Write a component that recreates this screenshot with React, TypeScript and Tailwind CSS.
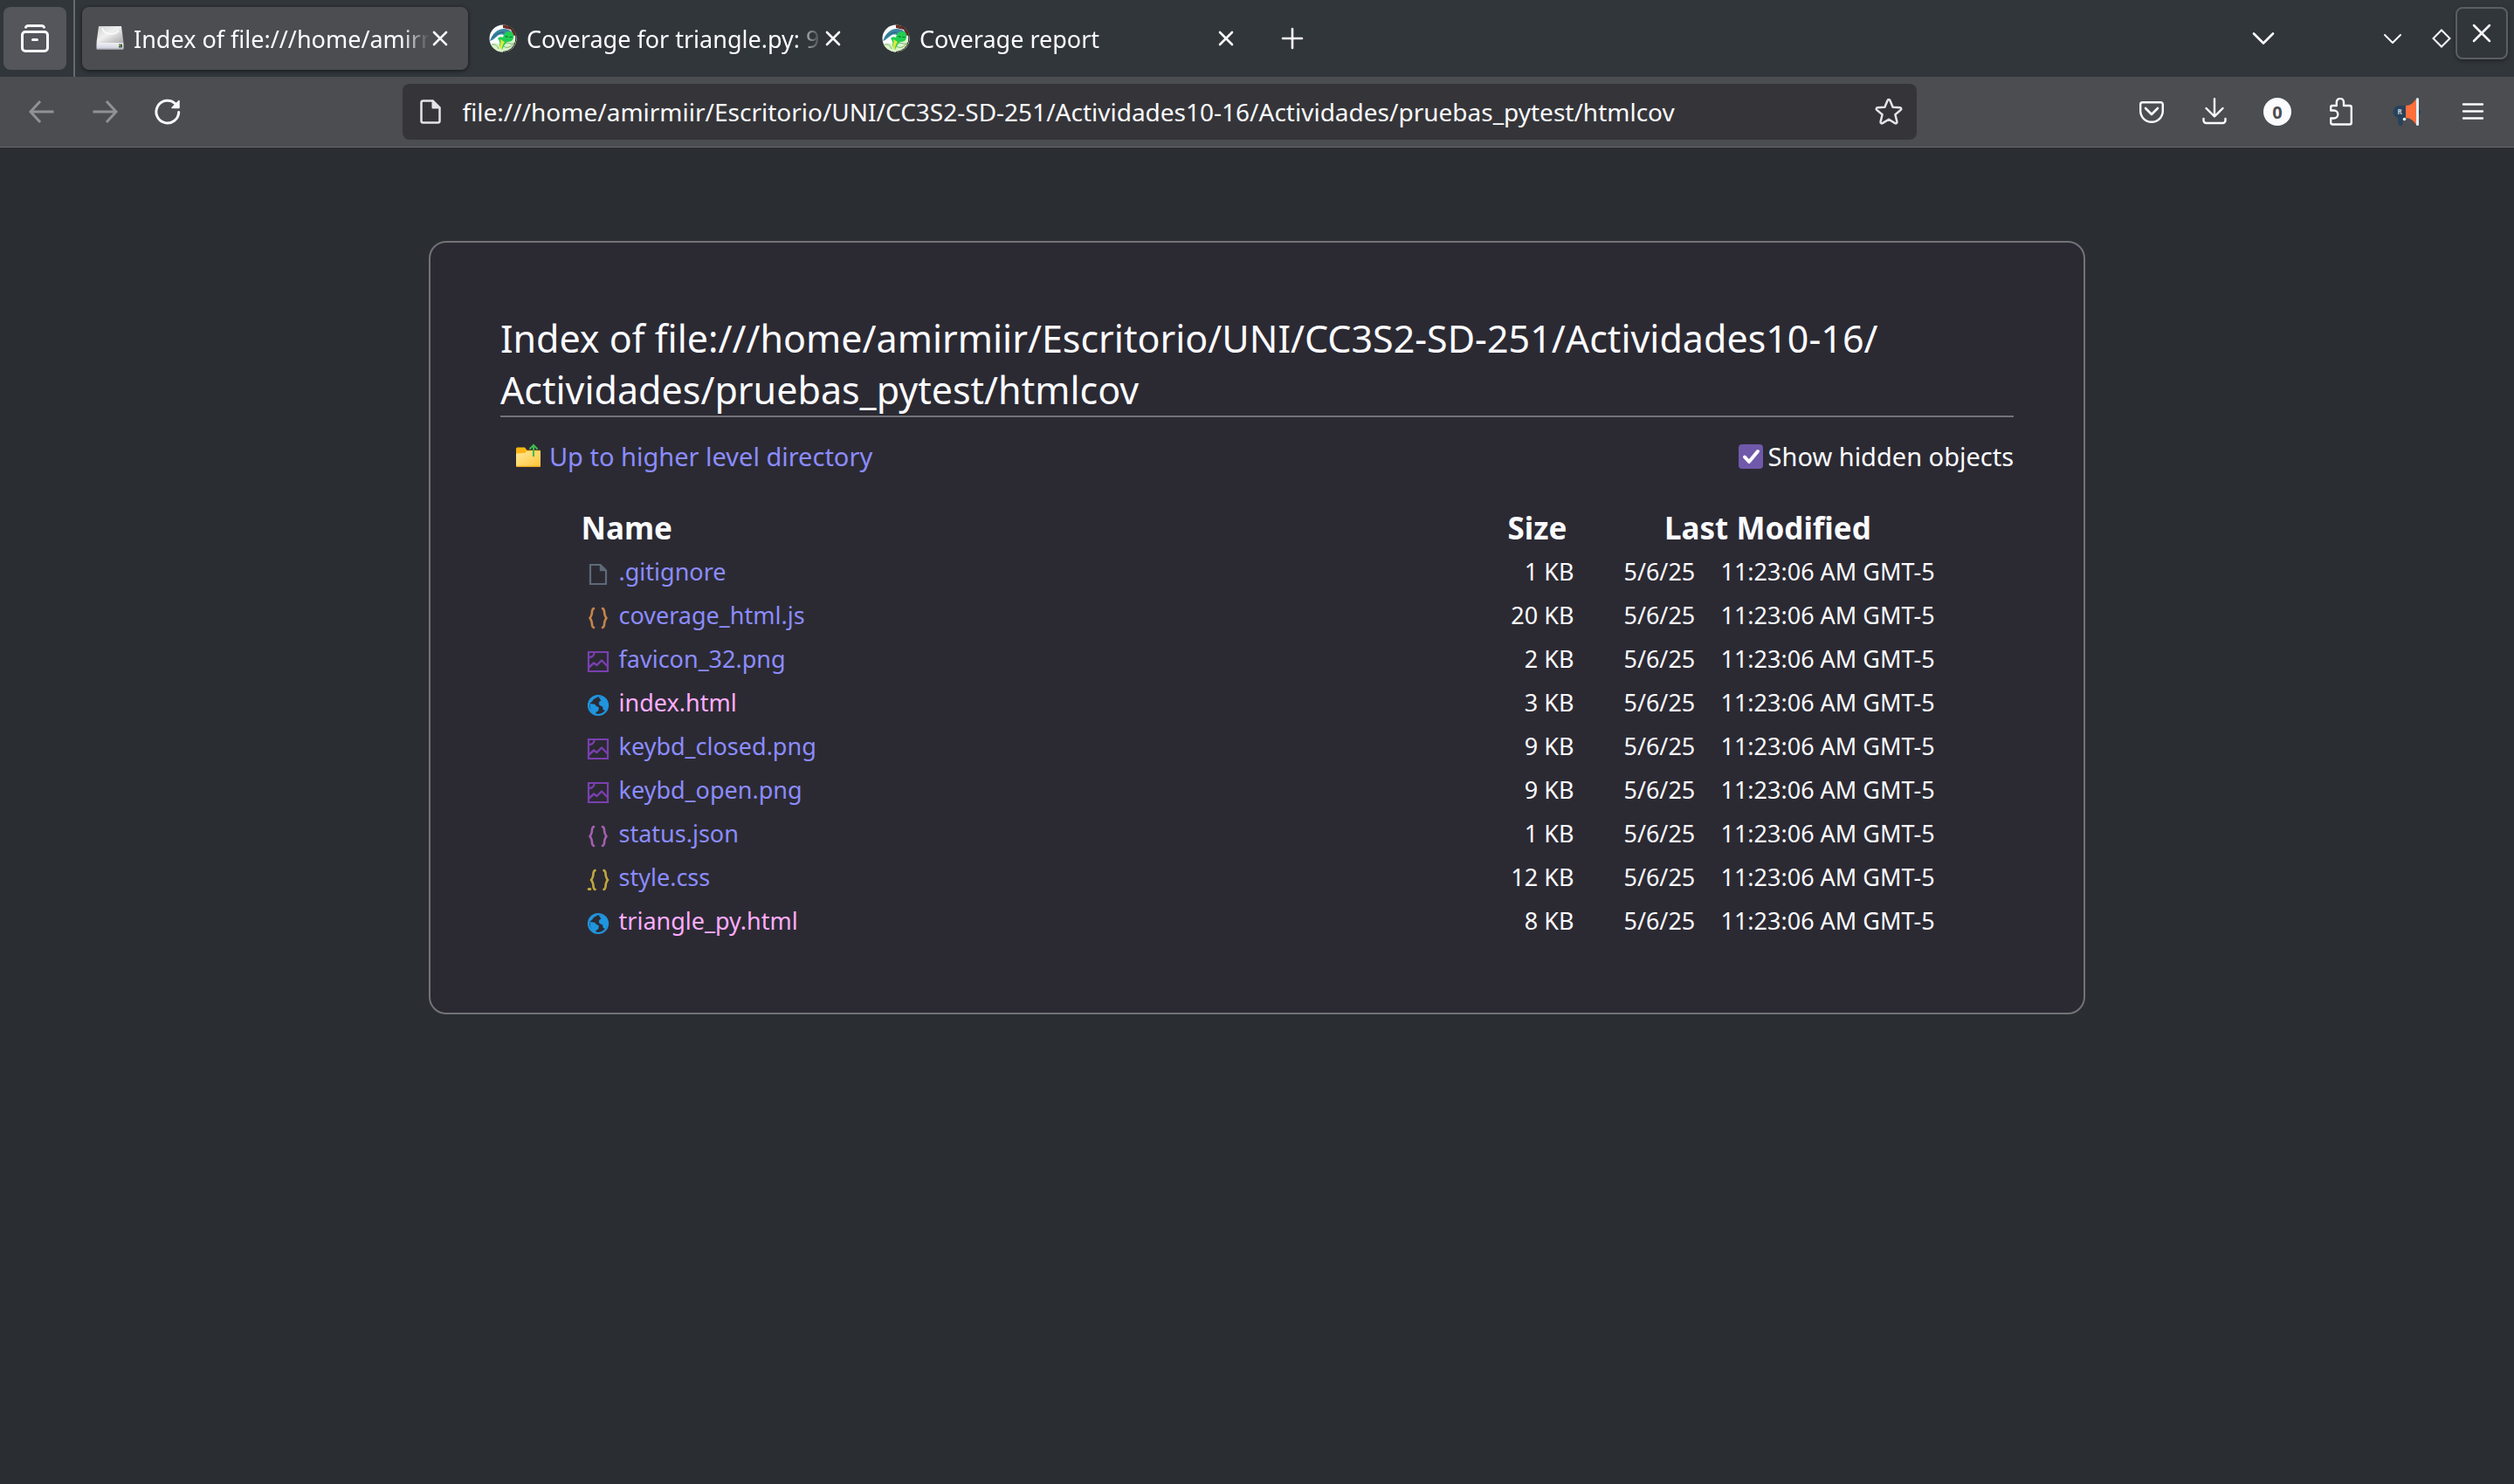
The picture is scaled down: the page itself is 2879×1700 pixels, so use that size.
import React, { useState } from "react";

type IconProps = { className?: string };

function Icon({ children, className = "" }: { children: React.ReactNode; className?: string }) {
  return (
    <svg
      viewBox="0 0 32 32"
      fill="none"
      stroke="currentColor"
      strokeWidth={3}
      strokeLinecap="round"
      strokeLinejoin="round"
      aria-hidden="true"
      className={`size-8 shrink-0 ${className}`}
    >
      {children}
    </svg>
  );
}

/* ---------- tab strip icons ---------- */

function FirefoxViewIcon() {
  return (
    <Icon>
      <path d="M5.500 3.200C6 1.800 7 1.500 8 1.500h16c1 0 2 .3 2.500 1.700" />
      <rect x="1.500" y="8.500" width="29" height="22" rx="3.500" />
      <path d="M13.500 17.500h5" />
    </Icon>
  );
}

function DriveIcon() {
  return (
    <svg viewBox="0 0 32 32" aria-hidden="true" className="size-8 shrink-0">
      <defs>
        <linearGradient id="driveTop" x1="0" y1="0" x2="1" y2="1">
          <stop offset="0" stopColor="#cfcfcf" />
          <stop offset="0.450" stopColor="#f0f0f0" />
          <stop offset="1" stopColor="#a8a8a8" />
        </linearGradient>
        <linearGradient id="driveFront" x1="0" y1="0" x2="0" y2="1">
          <stop offset="0" stopColor="#f0f0f4" />
          <stop offset="0.700" stopColor="#d5d6e4" />
          <stop offset="1" stopColor="#8f8f94" />
        </linearGradient>
      </defs>
      <path d="M3 2h26l2.500 19H.5z" fill="url(#driveTop)" />
      <path d="M7 4c2 8 14 9 19 3" stroke="#ffffff" strokeWidth="2" fill="none" opacity="0.700" />
      <rect x="0.500" y="21" width="31" height="8" rx="1" fill="url(#driveFront)" />
      <rect x="26" y="22.500" width="4" height="4" fill="#4b5a48" />
      <rect x="26" y="23" width="2" height="2" fill="#6fb23c" />
    </svg>
  );
}

function CoverageIcon() {
  return (
    <svg viewBox="0 0 32 32" aria-hidden="true" className="size-8 shrink-0">
      <defs>
        <clipPath id="coverageDisc">
          <circle cx="16" cy="16" r="15.500" />
        </clipPath>
      </defs>
      <g clipPath="url(#coverageDisc)">
        <rect width="32" height="32" fill="#fdfdfd" />
        <path d="M16 0h16v12l-4 1-3-7-9-2z" fill="#6d3024" />
        <path d="M0 32V24c4-3 8-3 12-2l6-3c5-1 9-1 14-2v15z" fill="#d9f3c8" />
        <path d="M1 19C4 10 10 5 17 5c4 0 7 1 9 4l-7 4c-3-2-7-2-9 0-3 2-5 5-9 6z" fill="#3b86a3" />
        <path d="M4 15c4-4 8-6 13-6" stroke="#2a5f78" strokeWidth="1" fill="none" />
        <path d="M16 15c1-5 4-7 7-7 4 0 6 3 5 8-1 3-4 4-7 4-3 2-4 5-6 9l-3-4c1-4 0-6-2-9 2-2 4-2 6-1z" fill="#1fce52" />
        <path d="M13 17c1 3 0 6-1 9l3 3c0-4 1-6 3-9z" fill="#dde83c" />
        <path d="M18.500 13.500l3 .8M23.500 14.500h3" stroke="#0e6d2c" strokeWidth="1.200" fill="none" />
        <path d="M3 23c5-1 7 2 8 5M17 25c3 3 9 1 12-4M19 21c4 0 6 2 9 1" stroke="#7fae73" strokeWidth="1" fill="none" />
      </g>
      <path d="M22 2a15.500 15.500 0 0 1-6 29.500" stroke="#2b2420" strokeWidth="1" fill="none" />
    </svg>
  );
}

function CloseGlyph({ className = "" }: IconProps) {
  return (
    <Icon className={className}>
      <path d="M9 9l14 14M23 9L9 23" strokeWidth="2.600" />
    </Icon>
  );
}

/* ---------- toolbar icons ---------- */

const BackIcon = () => (
  <Icon>
    <path d="M29.500 16H3M14 4L3 16l11 12" strokeLinecap="butt" strokeLinejoin="miter" />
  </Icon>
);

const ForwardIcon = () => (
  <Icon>
    <path d="M2.500 16H29M18 4l11 12-11 12" strokeLinecap="butt" strokeLinejoin="miter" />
  </Icon>
);

const ReloadIcon = () => (
  <Icon>
    <path d="M28.700 16.500A12.900 12.900 0 1 1 25 7" />
    <path d="M29 3.500V11.500H21z" fill="currentColor" strokeWidth="1.500" />
  </Icon>
);

const PageIcon = () => (
  <Icon className="text-[#e4e4e6]">
    <path d="M7.500 3.500h11l8 8v15a2 2 0 0 1-2 2h-17a2 2 0 0 1-2-2v-21a2 2 0 0 1 2-2z" strokeWidth="2.500" />
    <path d="M18.500 3.500v8h8z" fill="currentColor" strokeWidth="2" />
  </Icon>
);

const StarIcon = () => (
  <Icon className="text-[#e4e4e6]">
    <path
      d="M14.600 3a1.500 1.500 0 0 1 2.800 0l3.200 7.700 8.300.6a1.500 1.500 0 0 1 .9 2.600l-6.400 5.400 2 8.100a1.500 1.500 0 0 1-2.300 1.700L16 24.700l-7.100 4.400a1.500 1.500 0 0 1-2.300-1.700l2-8.100-6.400-5.400a1.500 1.500 0 0 1 .9-2.600l8.300-.6z"
      strokeWidth="2.500"
    />
  </Icon>
);

const PocketIcon = () => (
  <Icon>
    <path d="M5.500 5.200h21a2.300 2.300 0 0 1 2.300 2.300v7.500a12.800 12.800 0 0 1-25.600 0V7.500a2.300 2.300 0 0 1 2.300-2.300z" strokeWidth="2.400" />
    <path d="M9 12l7 7 7-7" strokeWidth="2.600" />
  </Icon>
);

const DownloadIcon = () => (
  <Icon>
    <path d="M16 1.200v20M6.500 12l9.500 9.500 9.500-9.500M3.500 24v2a3 3 0 0 0 3 3h19a3 3 0 0 0 3-3v-2" strokeWidth="2.400" />
  </Icon>
);

const CounterIcon = () => (
  <svg viewBox="0 0 32 32" aria-hidden="true" className="size-8 shrink-0">
    <circle cx="16" cy="16" r="16" fill="#fbfbfe" />
    <text x="16" y="23.500" textAnchor="middle" className="fill-[#4b4d51] font-['Noto_Sans',sans-serif] text-xl font-bold">
      0
    </text>
  </svg>
);

const PuzzleIcon = () => (
  <Icon>
    <path
      d="M5.200 14.500V11a2 2 0 0 1 2-2h4.600V5a4 4 0 0 1 8.200 0v4h6.800a2 2 0 0 1 2 2v17.500a2 2 0 0 1-2 2H7.200a2 2 0 0 1-2-2V23.500h3.600a4.500 4.500 0 0 0 0-9z"
      strokeWidth="2.400"
    />
  </Icon>
);

const MegaphoneIcon = () => (
  <svg viewBox="0 0 32 32" aria-hidden="true" className="size-8 shrink-0">
    <path d="M7 9h8v14h-3l-.5 7a2 2 0 0 1-2 2H8.500a2 2 0 0 1-2-2L6 22.800A7 7 0 0 1 7 9z" fill="#28425c" />
    <circle cx="30" cy="16.500" r="2.500" fill="#28425c" />
    <path d="M15 9c5 0 9-3 12-8v30c-3-5-7-8-12-8z" fill="#ff6f3c" />
    <rect x="27" y="0" width="3" height="32" rx="1.500" fill="#dfeffa" />
    <circle cx="13.500" cy="24.500" r="1.800" fill="#dfeffa" />
    <text x="8.200" y="19" textAnchor="middle" className="fill-[#c9d2da] font-['Noto_Sans',sans-serif] text-[8px] font-bold">
      R
    </text>
  </svg>
);

const MenuIcon = () => (
  <Icon>
    <path d="M5 7.500h22M5 15.500h22M5 23.500h22" strokeWidth="2.400" />
  </Icon>
);

/* ---------- directory listing icons ---------- */

function FolderUpIcon() {
  return (
    <svg viewBox="0 0 32 32" aria-hidden="true" className="size-8 shrink-0">
      <defs>
        <linearGradient id="folderFront" x1="0" y1="0" x2="1" y2="1">
          <stop offset="0" stopColor="#ffe89a" />
          <stop offset="1" stopColor="#ffc63a" />
        </linearGradient>
      </defs>
      <path d="M2 7a1.500 1.500 0 0 1 1.500-1.500H12l2.500 3.200H29a1 1 0 0 1 1 1V15H2z" fill="#fdb414" />
      <path d="M2 12.500l10-.5 2.500-2.500H30v17a1.500 1.500 0 0 1-1.500 1.500h-25A1.500 1.500 0 0 1 2 26.500z" fill="url(#folderFront)" />
      <path d="M2.500 27.300h27" stroke="#e5a31a" strokeWidth="1.200" />
      <path d="M22 16V3.500M17.500 7.500L22 3l4.500 4.500" stroke="#3fb950" strokeWidth="2" fill="none" />
    </svg>
  );
}

const FileGlyph = () => (
  <Icon className="text-[#5d6a77]">
    <path d="M7 5h11.500l6.500 6.500V27H7z" strokeWidth="2.200" strokeLinejoin="miter" />
    <path d="M18.500 5v6.500H25z" fill="currentColor" strokeWidth="1.500" />
  </Icon>
);

const Braces = () => (
  <path
    d="M11 5C8 6.500 9.500 9 8.500 12 8 14 7.500 15 6.500 16c1 1 1.500 2 2 4 1 3-.5 5.500 2.500 7M21 5c3 1.500 1.500 4 2.500 7 .5 2 1 3 2 4-1 1-1.500 2-2 4-1 3 .5 5.500-2.500 7"
    strokeWidth="2.600"
  />
);

const ScriptGlyph = () => (
  <Icon className="text-[#c5854b]">
    <Braces />
  </Icon>
);

const JsonGlyph = () => (
  <Icon className="text-[#a35fb0]">
    <Braces />
  </Icon>
);

const StyleGlyph = () => (
  <Icon className="text-[#c2a63c]">
    <g transform="translate(1.500 0)">
      <Braces />
    </g>
    <path d="M5.200 26.500h1.600" strokeWidth="3" />
  </Icon>
);

const ImageGlyph = () => (
  <Icon className="text-[#7b3fb0]">
    <path d="M5 5h22v22H5z" strokeWidth="2.200" strokeLinejoin="miter" />
    <path d="M11.500 5.500c0 4-2.500 5.500-6 5.500" strokeWidth="2.200" />
    <path d="M5.500 22.500l5.500-5 3.500 2.500 5.500-5.500 6.500 6.500" strokeWidth="2.400" />
  </Icon>
);

const GlobeGlyph = () => (
  <Icon className="text-[#2095df]">
    <circle cx="16" cy="16" r="11" strokeWidth="2.200" />
    <path
      d="M6 13c1-4 4-7 8-8l1 1.500-4 2L8.500 12z M7 14.500l5 .5 1.500 2 3 1.500-.5 3.500-3 2V27C9 25 6.500 21 7 14.500z M17 6.500l6 1 3.500 5.500v4l-2 4.500-2.500-.5-.5-3.500-4-2-.5-3 2.500-2z"
      fill="currentColor"
      strokeWidth="0.600"
    />
  </Icon>
);

/* ---------- browser chrome ---------- */

type TabInfo = { title: string; icon: React.ReactNode };

const tabs: TabInfo[] = [
  { title: "Index of file:///home/amirmiir", icon: <DriveIcon /> },
  { title: "Coverage for triangle.py: 91%", icon: <CoverageIcon /> },
  { title: "Coverage report", icon: <CoverageIcon /> },
];

function Tab({ tab, active, onSelect }: { tab: TabInfo; active: boolean; onSelect: () => void }) {
  return (
    <div
      className={`flex h-18 w-[442px] min-w-0 items-center rounded-lg pr-5 pl-4 ${
        active ? "bg-[#4b4d51] shadow-[0_1px_4px_rgba(0,0,0,0.6)]" : ""
      }`}
    >
      <button
        type="button"
        role="tab"
        aria-selected={active}
        onClick={onSelect}
        className="flex min-w-0 flex-1 items-center gap-[11px] text-left"
      >
        {tab.icon}
        <span className="min-w-0 flex-1 overflow-hidden text-[27px] leading-[37px] whitespace-nowrap [mask-image:linear-gradient(to_left,transparent,black_32px)]">
          {tab.title}
        </span>
      </button>
      <button type="button" aria-label={`Close ${tab.title}`} className="flex w-6 shrink-0 justify-center">
        <CloseGlyph />
      </button>
    </div>
  );
}

function TabStrip() {
  const [current, setCurrent] = useState(0);
  return (
    <header className="flex h-22 items-center bg-[#31363b] pl-1">
      <button
        type="button"
        aria-label="View recent browsing"
        className="flex size-18 shrink-0 items-center justify-center rounded-lg bg-[#54565b]"
      >
        <FirefoxViewIcon />
      </button>
      <div className="ml-2 h-full w-0.5 shrink-0 bg-[#66696d]" />
      <div role="tablist" className="ml-2 flex min-w-0 gap-2">
        {tabs.map((tab, i) => (
          <Tab key={tab.title} tab={tab} active={i === current} onSelect={() => setCurrent(i)} />
        ))}
      </div>
      <button type="button" aria-label="New tab" className="ml-2 flex size-18 shrink-0 items-center justify-center">
        <Icon>
          <path d="M16 5v22M5 16h22" strokeWidth="2.600" />
        </Icon>
      </button>
      <div className="flex-1" />
      <button type="button" aria-label="List all tabs" className="flex size-18 shrink-0 items-center justify-center">
        <Icon>
          <path d="M5 10.500l11 11 11-11" strokeWidth="2.600" />
        </Icon>
      </button>
      <div className="ml-24 flex shrink-0 items-center gap-6">
        <button type="button" aria-label="Minimize">
          <Icon>
            <path d="M7 12l9 9 9-9" strokeWidth="2" />
          </Icon>
        </button>
        <button type="button" aria-label="Restore">
          <Icon>
            <path d="M16 6.500l9.500 9.500-9.500 9.500L6.500 16z" strokeWidth="2" strokeLinejoin="miter" />
          </Icon>
        </button>
      </div>
      <button
        type="button"
        aria-label="Close window"
        className="mt-2 mr-[7px] flex size-15 shrink-0 items-center justify-center self-start rounded-lg border-2 border-[#5b5e63] shadow-[0_2px_4px_rgba(0,0,0,0.35)]"
      >
        <Icon>
          <path d="M7 7l18 18M25 7L7 25" strokeWidth="2.500" />
        </Icon>
      </button>
    </header>
  );
}

function ToolButton({
  label,
  disabled,
  className = "w-18",
  children,
}: {
  label: string;
  disabled?: boolean;
  className?: string;
  children: React.ReactNode;
}) {
  return (
    <button
      type="button"
      aria-label={label}
      disabled={disabled}
      className={`flex h-16 items-center justify-center disabled:text-[#909195] ${className}`}
    >
      {children}
    </button>
  );
}

function Toolbar() {
  return (
    <nav className="flex items-center border-b border-[#65696c] bg-[#4b4d51] py-2">
      <div className="flex shrink-0 pl-3">
        <ToolButton label="Back" disabled>
          <BackIcon />
        </ToolButton>
        <ToolButton label="Forward" disabled>
          <ForwardIcon />
        </ToolButton>
        <ToolButton label="Reload">
          <ReloadIcon />
        </ToolButton>
      </div>
      <div className="flex-1" />
      <div className="flex h-16 w-[60.2%] items-center rounded-lg bg-[#353539] px-4">
        <PageIcon />
        <input
          type="text"
          aria-label="Address"
          defaultValue="file:///home/amirmiir/Escritorio/UNI/CC3S2-SD-251/Actividades10-16/Actividades/pruebas_pytest/htmlcov"
          className="ml-5 min-w-0 flex-1 bg-transparent text-[28px] leading-[38px] outline-none"
        />
        <button type="button" aria-label="Bookmark this page">
          <StarIcon />
        </button>
      </div>
      <div className="flex-1" />
      <div className="flex shrink-0 pr-[11px]">
        <ToolButton label="Save to Pocket">
          <PocketIcon />
        </ToolButton>
        <ToolButton label="Downloads">
          <DownloadIcon />
        </ToolButton>
        <ToolButton label="Blocked items">
          <CounterIcon />
        </ToolButton>
        <ToolButton label="Extensions">
          <PuzzleIcon />
        </ToolButton>
        <ToolButton label="Announcements" className="w-20">
          <MegaphoneIcon />
        </ToolButton>
        <ToolButton label="Open application menu">
          <MenuIcon />
        </ToolButton>
      </div>
    </nav>
  );
}

/* ---------- page ---------- */

type Entry = { name: string; size: string; icon: React.ReactNode; visited?: boolean };

const entries: Entry[] = [
  { name: ".gitignore", size: "1 KB", icon: <FileGlyph /> },
  { name: "coverage_html.js", size: "20 KB", icon: <ScriptGlyph /> },
  { name: "favicon_32.png", size: "2 KB", icon: <ImageGlyph /> },
  { name: "index.html", size: "3 KB", icon: <GlobeGlyph />, visited: true },
  { name: "keybd_closed.png", size: "9 KB", icon: <ImageGlyph /> },
  { name: "keybd_open.png", size: "9 KB", icon: <ImageGlyph /> },
  { name: "status.json", size: "1 KB", icon: <JsonGlyph /> },
  { name: "style.css", size: "12 KB", icon: <StyleGlyph /> },
  { name: "triangle_py.html", size: "8 KB", icon: <GlobeGlyph />, visited: true },
];

function Listing() {
  const [showHidden, setShowHidden] = useState(true);
  const rows = showHidden ? entries : entries.filter((e) => !e.name.startsWith("."));
  return (
    <main className="mx-auto mt-[107px] w-[65.9%] rounded-[20px] border-2 border-[#737278] bg-[#2b2a33] p-20 text-[#fbfbfe]">
      <h1 className="border-b-2 border-[#737278] text-[43px] leading-[59px]">
        Index of file:///home/amirmiir/Escritorio/UNI/CC3S2-SD-251/Actividades10-16/
        <wbr />
        Actividades/pruebas_pytest/htmlcov
      </h1>
      <div className="mt-[25px] flex items-start justify-between pl-4 text-[29px] leading-10">
        <a href="#up" className="flex items-center gap-2 text-[#8c8cff]">
          <FolderUpIcon />
          Up to higher level directory
        </a>
        <label htmlFor="show-hidden" className="flex items-center gap-1.5">
          <span className="grid size-7">
            <input
              id="show-hidden"
              type="checkbox"
              checked={showHidden}
              onChange={(e) => setShowHidden(e.target.checked)}
              className="peer col-start-1 row-start-1 size-7 appearance-none rounded border-2 border-[#8f8f9d] checked:border-[#7059ab] checked:bg-[#7059ab]"
            />
            <svg
              viewBox="0 0 28 28"
              aria-hidden="true"
              className="pointer-events-none invisible col-start-1 row-start-1 size-7 peer-checked:visible"
            >
              <path d="M7 14.500l5 5.500 10-12" fill="none" stroke="#fff" strokeWidth="4" strokeLinecap="round" strokeLinejoin="round" />
            </svg>
          </span>
          Show hidden objects
        </label>
      </div>
      <table className="mx-auto mt-[37px] w-[90%] table-fixed whitespace-nowrap">
        <colgroup>
          <col />
          <col className="w-[116px]" />
          <col className="w-[127px]" />
          <col className="w-[263px]" />
        </colgroup>
        <thead className="text-[35px] leading-[50px] font-bold">
          <tr>
            <th scope="col" className="pl-1.5 text-left">
              Name
            </th>
            <th scope="col" className="pr-[22px] text-center">
              Size
            </th>
            <th scope="col" colSpan={2} className="text-center">
              Last Modified
            </th>
          </tr>
        </thead>
        <tbody className="text-[27px] leading-[50px]">
          {rows.map((entry) => (
            <tr key={entry.name}>
              <td className="pl-[9px]">
                <a
                  href={`#${entry.name}`}
                  className={`inline-flex items-center gap-2 align-top ${entry.visited ? "text-[#ffadff]" : "text-[#8c8cff]"}`}
                >
                  <span className="pt-1.5">{entry.icon}</span>
                  {entry.name}
                </a>
              </td>
              <td className="pr-[27px] text-right">{entry.size}</td>
              <td className="pl-[30px]">5/6/25</td>
              <td className="pl-[14px]">11:23:06 AM GMT-5</td>
            </tr>
          ))}
        </tbody>
      </table>
    </main>
  );
}

export default function App() {
  return (
    <div className="min-h-screen bg-[#2a2e32] font-['Noto_Sans',sans-serif] text-[#fbfbfe]">
      <TabStrip />
      <Toolbar />
      <Listing />
    </div>
  );
}
